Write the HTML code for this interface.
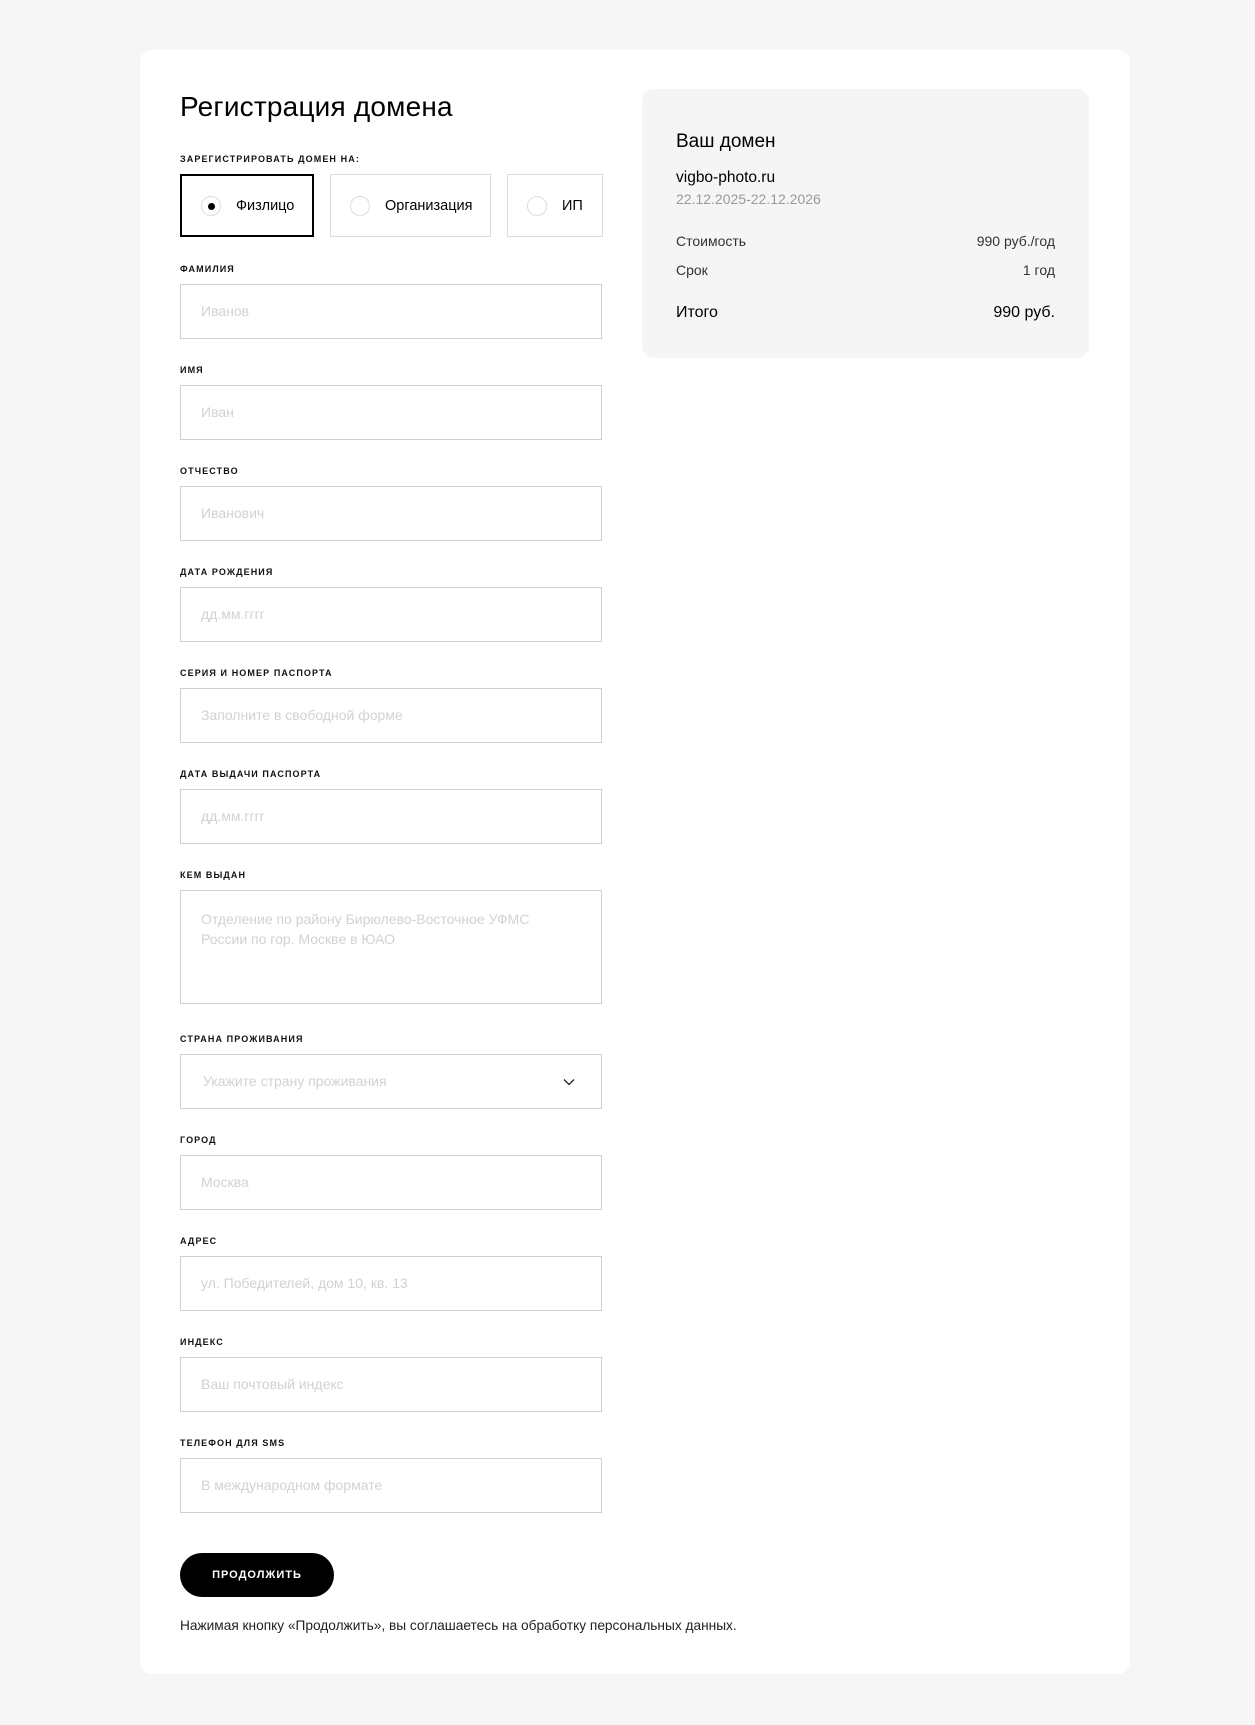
<!DOCTYPE html>
<html><head><meta charset="utf-8"><style>
*{box-sizing:border-box;margin:0;padding:0}
body{width:1255px;height:1725px;background:#f6f6f6;font-family:"Liberation Sans",sans-serif;color:#000;position:relative;overflow:hidden}
.card{position:absolute;left:140px;top:50px;width:990px;height:1624px;background:#fff;border-radius:12px}
.a{position:absolute}
h1{position:absolute;left:180px;top:91px;font-size:28px;font-weight:normal;letter-spacing:0.2px}
.lbl{position:absolute;left:180px;font-size:9px;font-weight:bold;letter-spacing:1.1px;color:#111;margin-top:2px}
.inp{position:absolute;left:180px;width:422px;height:55px;border:1px solid #cfcfcf;font-size:14px;color:#d2d2d2;padding:18px 20px}
.rb{position:absolute;top:174px;height:63px;border:1px solid #dcdcdc;font-size:14.5px;display:flex;align-items:center}
.rb .c{width:20px;height:20px;border:1px solid #ddd;border-radius:50%;margin-right:15px;position:relative}
.panel{position:absolute;left:642px;top:89px;width:447px;height:269px;background:#f5f5f5;border-radius:12px}
.row{position:absolute;left:34px;right:34px;display:flex;justify-content:space-between;font-size:14px;color:#333}
</style></head><body>
<div class="card"></div>
<h1>Регистрация домена</h1>
<div class="lbl" style="top:152px">ЗАРЕГИСТРИРОВАТЬ ДОМЕН НА:</div>
<div class="rb" style="left:180px;width:134px;border:2px solid #000;padding-left:19px"><span class="c"><span style="position:absolute;left:6px;top:6px;width:7px;height:7px;background:#000;border-radius:50%"></span></span>Физлицо</div>
<div class="rb" style="left:330px;width:161px;padding-left:19px"><span class="c"></span>Организация</div>
<div class="rb" style="left:507px;width:96px;padding-left:19px"><span class="c"></span>ИП</div>

<div class="lbl" style="top:262px">ФАМИЛИЯ</div><div class="inp" style="top:284px">Иванов</div>
<div class="lbl" style="top:363px">ИМЯ</div><div class="inp" style="top:385px">Иван</div>
<div class="lbl" style="top:464px">ОТЧЕСТВО</div><div class="inp" style="top:486px">Иванович</div>
<div class="lbl" style="top:565px">ДАТА РОЖДЕНИЯ</div><div class="inp" style="top:587px">дд.мм.гггг</div>
<div class="lbl" style="top:666px">СЕРИЯ И НОМЕР ПАСПОРТА</div><div class="inp" style="top:688px">Заполните в свободной форме</div>
<div class="lbl" style="top:767px">ДАТА ВЫДАЧИ ПАСПОРТА</div><div class="inp" style="top:789px">дд.мм.гггг</div>
<div class="lbl" style="top:868px">КЕМ ВЫДАН</div><div class="inp" style="top:890px;height:114px;line-height:20px;padding-top:18px;padding-right:50px">Отделение по району Бирюлево-Восточное УФМС России по гор. Москве в ЮАО</div>
<div class="lbl" style="top:1032px">СТРАНА ПРОЖИВАНИЯ</div><div class="inp" style="top:1054px;padding-left:22px">Укажите страну проживания<svg style="position:absolute;right:26px;top:23px" width="12" height="8" viewBox="0 0 12 8"><path d="M1 1.5L6 6.5L11 1.5" fill="none" stroke="#222" stroke-width="1.3"/></svg></div>
<div class="lbl" style="top:1133px">ГОРОД</div><div class="inp" style="top:1155px">Москва</div>
<div class="lbl" style="top:1234px">АДРЕС</div><div class="inp" style="top:1256px">ул. Победителей, дом 10, кв. 13</div>
<div class="lbl" style="top:1335px">ИНДЕКС</div><div class="inp" style="top:1357px">Ваш почтовый индекс</div>
<div class="lbl" style="top:1436px">ТЕЛЕФОН ДЛЯ SMS</div><div class="inp" style="top:1458px">В международном формате</div>

<div class="a" style="left:180px;top:1553px;width:154px;height:44px;background:#000;border-radius:22px;color:#fff;font-size:11px;font-weight:bold;letter-spacing:1px;text-align:center;line-height:44px">ПРОДОЛЖИТЬ</div>
<div class="a" style="left:180px;top:1618px;font-size:13.7px;color:#222">Нажимая кнопку «Продолжить», вы соглашаетесь на обработку персональных данных.</div>

<div class="panel">
<div class="a" style="left:34px;top:42px;font-size:19px">Ваш домен</div>
<div class="a" style="left:34px;top:80px;font-size:15.5px">vigbo-photo.ru</div>
<div class="a" style="left:34px;top:102px;font-size:14px;color:#999">22.12.2025-22.12.2026</div>
<div class="row" style="top:144px"><span>Стоимость</span><span>990 руб./год</span></div>
<div class="row" style="top:173px"><span>Срок</span><span>1 год</span></div>
<div class="row" style="top:215px;font-size:16px;color:#000"><span>Итого</span><span>990 руб.</span></div>
</div>
</body></html>
